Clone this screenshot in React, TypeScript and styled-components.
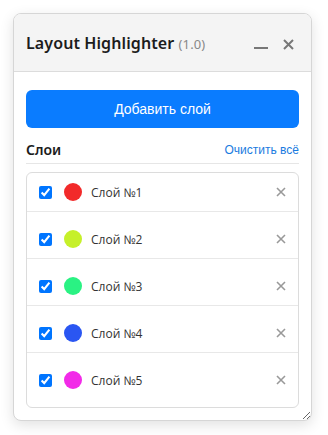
import styled, { createGlobalStyle } from "styled-components";

interface Layer {
  id: number;
  name: string;
  color: string;
}

const layers: Layer[] = [
  { id: 1, name: "Слой №1", color: "#f22a2a" },
  { id: 2, name: "Слой №2", color: "#c6f02a" },
  { id: 3, name: "Слой №3", color: "#2af283" },
  { id: 4, name: "Слой №4", color: "#2a56f2" },
  { id: 5, name: "Слой №5", color: "#f22ae8" },
];

const App = () => {
  return (
    <Page>
      <GlobalStyle />
      <Panel>
        <Header>
          <Title>
            Layout Highlighter <Version>(1.0)</Version>
          </Title>
          <HeaderActions>
            <IconButton aria-label="minimize">
              <svg width="14" height="10" viewBox="0 0 14 10">
                <line x1="0" y1="8" x2="14" y2="8" stroke="#777" strokeWidth="2" />
              </svg>
            </IconButton>
            <IconButton aria-label="close">
              <svg width="11" height="11" viewBox="0 0 11 11">
                <path d="M1 1 L10 10 M10 1 L1 10" stroke="#777" strokeWidth="2" />
              </svg>
            </IconButton>
          </HeaderActions>
        </Header>
        <Body>
          <AddButton>Добавить слой</AddButton>
          <SectionHead>
            <SectionTitle>Слои</SectionTitle>
            <ClearLink>Очистить всё</ClearLink>
          </SectionHead>
          <LayerList>
            {layers.map((layer) => (
              <LayerRow key={layer.id}>
                <Check type="checkbox" defaultChecked />
                <Swatch $color={layer.color} />
                <LayerName>{layer.name}</LayerName>
                <RemoveButton aria-label="remove">
                  <svg width="10" height="10" viewBox="0 0 10 10">
                    <path d="M1 1 L9 9 M9 1 L1 9" stroke="#999" strokeWidth="1.6" />
                  </svg>
                </RemoveButton>
              </LayerRow>
            ))}
          </LayerList>
        </Body>
      </Panel>
    </Page>
  );
};

const GlobalStyle = createGlobalStyle`
  body {
    margin: 0;
    background: #fff;
    font-family: "Open Sans", sans-serif;
  }
`;

const Page = styled.div`
  padding: 13px 16px 14px 13px;
`;

const Panel = styled.div`
  width: 299px;
  height: 408px;
  box-sizing: border-box;
  border: 1px solid #d6d6d6;
  border-radius: 8px;
  background: #fff;
  box-shadow: 0 4px 14px rgba(0, 0, 0, 0.12);
  overflow: auto;
  resize: vertical;
`;

const Header = styled.div`
  display: flex;
  align-items: center;
  justify-content: space-between;
  height: 57px;
  padding: 0 17px 0 12px;
  background: #f4f4f4;
  border-bottom: 1px solid #dcdcdc;
`;

const Title = styled.div`
  font-family: "Noto Sans", sans-serif;
  font-weight: 600;
  font-size: 16px;
  color: #1c1c1c;
  letter-spacing: 0.1px;
`;

const Version = styled.span`
  font-weight: 400;
  font-size: 13px;
  color: #888;
`;

const HeaderActions = styled.div`
  display: flex;
  align-items: center;
  gap: 15px;
  margin-top: 4px;
`;

const IconButton = styled.button`
  border: none;
  background: none;
  padding: 0;
  display: flex;
  align-items: center;
  cursor: pointer;
`;

const Body = styled.div`
  padding: 18px 12px 12px 12px;
`;

const AddButton = styled.button`
  display: block;
  width: 100%;
  height: 38px;
  border: none;
  border-radius: 6px;
  background: #0a7cff;
  color: #fff;
  font-family: "Liberation Sans", Arial, sans-serif;
  font-size: 14px;
  cursor: pointer;
`;

const SectionHead = styled.div`
  display: flex;
  align-items: center;
  justify-content: space-between;
  margin-top: 12px;
  padding-bottom: 4px;
  border-bottom: 1px solid #e6e6e6;
`;

const SectionTitle = styled.div`
  font-family: "Noto Sans", sans-serif;
  font-weight: 600;
  font-size: 14px;
  color: #1c1c1c;
`;

const ClearLink = styled.a`
  font-family: "Liberation Sans", Arial, sans-serif;
  font-size: 12px;
  color: #1a7be0;
  cursor: pointer;
`;

const LayerList = styled.div`
  margin-top: 8px;
  border: 1px solid #dcdcdc;
  border-radius: 6px;
  padding: 0 0 8px 0;
`;

const LayerRow = styled.div`
  display: flex;
  align-items: center;
  height: 38px;
  padding: 0 12px;
  border-bottom: 1px solid #e8e8e8;
  & + & {
    margin-top: 8px;
  }
  &:last-child {
    border-bottom: none;
  }
`;

const Check = styled.input`
  width: 13px;
  height: 13px;
  margin: 0 12px 0 0;
`;

const Swatch = styled.span<{ $color: string }>`
  width: 18px;
  height: 18px;
  border-radius: 50%;
  background: ${({ $color }) => $color};
  margin-right: 9px;
`;

const LayerName = styled.span`
  flex: 1;
  font-size: 12px;
  color: #333;
`;

const RemoveButton = styled.button`
  border: none;
  background: none;
  padding: 0;
  display: flex;
  cursor: pointer;
`;

export default App;
